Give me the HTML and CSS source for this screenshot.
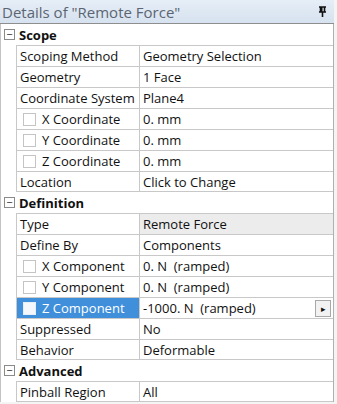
FILE: index.html
```html
<!DOCTYPE html>
<html lang="en">
<head>
  <meta charset="UTF-8" />
  <title>Details of "Remote Force"</title>
  <link rel="stylesheet" href="styles.css">
</head>
<body>

<div class="panel">
  <div class="title-bar">
    <span class="title">Details of "Remote Force"</span>
    <svg class="pin" width="9" height="11" viewBox="0 0 9 11">
      <path d="M1 1h7M2.5 1v5M6.5 1v5M1 6h7M4.5 6v5" stroke="#111" stroke-width="1.6" fill="none"/>
      <rect x="2.5" y="1" width="2" height="5" fill="#111"/>
    </svg>
  </div>

  <div class="grid">
    <div class="group"><span class="toggle">−</span><span class="group-name">Scope</span></div>
    <div class="row"><div class="label">Scoping Method</div><div class="value">Geometry Selection</div></div>
    <div class="row"><div class="label">Geometry</div><div class="value">1 Face</div></div>
    <div class="row"><div class="label">Coordinate System</div><div class="value">Plane4</div></div>
    <div class="row"><div class="label"><span class="check"></span>X Coordinate</div><div class="value">0. mm</div></div>
    <div class="row"><div class="label"><span class="check"></span>Y Coordinate</div><div class="value">0. mm</div></div>
    <div class="row"><div class="label"><span class="check"></span>Z Coordinate</div><div class="value">0. mm</div></div>
    <div class="row"><div class="label">Location</div><div class="value">Click to Change</div></div>

    <div class="group"><span class="toggle">−</span><span class="group-name">Definition</span></div>
    <div class="row"><div class="label">Type</div><div class="value readonly">Remote Force</div></div>
    <div class="row"><div class="label">Define By</div><div class="value">Components</div></div>
    <div class="row"><div class="label"><span class="check"></span>X Component</div><div class="value">0. N&nbsp; (ramped)</div></div>
    <div class="row"><div class="label"><span class="check"></span>Y Component</div><div class="value">0. N&nbsp; (ramped)</div></div>
    <div class="row selected"><div class="label"><span class="check"></span>Z Component</div><div class="value">-1000. N&nbsp; (ramped)<span class="more">▸</span></div></div>
    <div class="row"><div class="label">Suppressed</div><div class="value">No</div></div>
    <div class="row"><div class="label">Behavior</div><div class="value">Deformable</div></div>

    <div class="group"><span class="toggle">−</span><span class="group-name">Advanced</span></div>
    <div class="row"><div class="label">Pinball Region</div><div class="value">All</div></div>
  </div>
</div>

</body>
</html>
```

FILE: styles.css
```css
body {
  margin: 0;
  background: #f4f4f4;
  font-family: 'Open Sans', sans-serif;
  font-size: 13px;
  color: #111;
}

.panel {
  width: 334px;
  background: white;
}

.title-bar {
  height: 23px;
  display: flex;
  align-items: center;
  justify-content: space-between;
  padding: 0 7px 0 2px;
  background: linear-gradient(#e6eef7, #d6e2ef);
  border-bottom: 1px solid #8e8e8e;
}

.title {
  font-size: 15px;
  color: #5b6572;
}

.pin {
  display: block;
}

.grid {
  border-left: 1px solid #c4c4c4;
  border-right: 1px solid #b0b0b0;
}

.group {
  height: 21px;
  display: flex;
  align-items: center;
}

.toggle {
  width: 9px;
  height: 9px;
  margin: 0 4px 0 3px;
  border: 1px solid #8a8a8a;
  font-size: 11px;
  line-height: 8px;
  text-align: center;
  color: #222;
}

.group-name {
  font-weight: bold;
}

.row {
  height: 21px;
  display: grid;
  grid-template-columns: 123px 1fr;
  margin-left: 15px;
  border-left: 1px solid #c8c8c8;
}

.label,
.value {
  display: flex;
  align-items: center;
  padding-left: 3px;
  border-top: 1px solid #c8c8c8;
  white-space: nowrap;
}

.label {
  border-right: 1px solid #c8c8c8;
}

.group + .row .label,
.group + .row .value {
  border-top-color: #c8c8c8;
}

.row:last-child .label,
.row:last-child .value,
.row:has(+ .group) .label,
.row:has(+ .group) .value {
  border-bottom: 1px solid #c8c8c8;
}

.readonly {
  background: #ececec;
}

.check {
  width: 11px;
  height: 11px;
  margin: 0 6px 0 3px;
  border: 1px solid #c4c4c4;
  background: white;
}

.selected .label {
  background: #3f8fdb;
  color: white;
}

.selected .check {
  border-color: #e6eef8;
  background: #f4f7fb;
}

.value .more {
  margin-left: auto;
  margin-right: 2px;
  width: 14px;
  height: 15px;
  border: 1px solid #a8a8a8;
  background: #f2f2f2;
  font-size: 9px;
  line-height: 15px;
  text-align: center;
}
```
